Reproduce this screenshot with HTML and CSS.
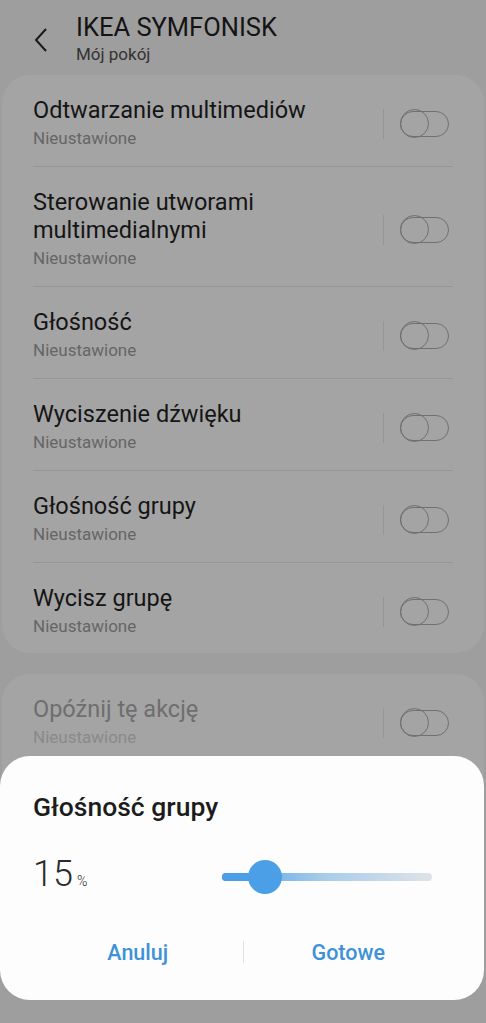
FILE: index.html
```html
<!DOCTYPE html>
<html lang="pl">
<head>
    <meta charset="UTF-8">
    <meta name="viewport" content="width=device-width, initial-scale=1.0">
    <title>IKEA SYMFONISK</title>
    <link rel="stylesheet" href="styles.css">
</head>
<body>
    <header class="topbar">
        <svg class="back" width="16" height="26" viewBox="0 0 16 26">
            <path d="M13 2 L3 13 L13 24" fill="none" stroke="#1a1a1a" stroke-width="2"/>
        </svg>
        <div class="heading">
            <div class="title">IKEA SYMFONISK</div>
            <div class="subtitle">Mój pokój</div>
        </div>
    </header>

    <section class="card">
        <div class="row">
            <div class="text"><div class="name">Odtwarzanie multimediów</div><div class="state">Nieustawione</div></div>
            <span class="sep"></span><span class="switch"></span>
        </div>
        <div class="row">
            <div class="text"><div class="name">Sterowanie utworami<br>multimedialnymi</div><div class="state">Nieustawione</div></div>
            <span class="sep"></span><span class="switch"></span>
        </div>
        <div class="row">
            <div class="text"><div class="name">Głośność</div><div class="state">Nieustawione</div></div>
            <span class="sep"></span><span class="switch"></span>
        </div>
        <div class="row">
            <div class="text"><div class="name">Wyciszenie dźwięku</div><div class="state">Nieustawione</div></div>
            <span class="sep"></span><span class="switch"></span>
        </div>
        <div class="row">
            <div class="text"><div class="name">Głośność grupy</div><div class="state">Nieustawione</div></div>
            <span class="sep"></span><span class="switch"></span>
        </div>
        <div class="row">
            <div class="text"><div class="name">Wycisz grupę</div><div class="state">Nieustawione</div></div>
            <span class="sep"></span><span class="switch"></span>
        </div>
    </section>

    <section class="card">
        <div class="row disabled">
            <div class="text"><div class="name">Opóźnij tę akcję</div><div class="state">Nieustawione</div></div>
            <span class="sep"></span><span class="switch"></span>
        </div>
        <div class="row disabled">
            <div class="text"><div class="name">&nbsp;</div><div class="state">&nbsp;</div></div>
        </div>
    </section>

    <div class="dialog">
        <h2 class="dialog-title">Głośność grupy</h2>
        <div class="volume">
            <div class="value">15<span class="pct">%</span></div>
            <div class="slider">
                <div class="fill"></div>
                <div class="thumb"></div>
            </div>
        </div>
        <div class="actions">
            <button class="btn">Anuluj</button>
            <span class="divider"></span>
            <button class="btn">Gotowe</button>
        </div>
    </div>
</body>
</html>
```

FILE: styles.css
```css
body{
    margin:0;
    background:#9e9e9e;
    font-family:Roboto, "Noto Sans", sans-serif;
    color:#141414;
    overflow:hidden;
    height:1023px;
}
.topbar{
    display:flex;
    align-items:flex-start;
    height:75px;
    box-sizing:border-box;
    padding:12px 0 0 33px;
}
.back{
    margin-top:15px;
    margin-right:27px;
}
.title{
    font-size:25.5px;
    line-height:30px;
    color:#141414;
}
.subtitle{
    font-size:17px;
    line-height:25px;
    color:#333;
}
.card{
    background:#a4a4a4;
    margin:0 2px 21px 2px;
    border-radius:28px;
    padding:0 31px 0 31px;
}
.row{
    display:flex;
    align-items:center;
    padding:21px 0 14px 0;
    border-bottom:1px solid #959595;
}
.row:last-child{
    border-bottom:none;
    padding-bottom:13px;
}
.text{
    flex:1;
}
.name{
    font-size:23.5px;
    line-height:28px;
    color:#151515;
}
.state{
    font-size:17px;
    line-height:28px;
    color:#666;
}
.disabled .name{
    color:#6e6e6e;
}
.disabled .state{
    color:#8a8a8a;
}
.sep{
    width:1px;
    height:30px;
    background:#969696;
    margin-right:16px;
}
.switch{
    position:relative;
    width:49px;
    height:26px;
    box-sizing:border-box;
    border:1.5px solid #707070;
    border-radius:13px;
    margin-right:4px;
}
.switch::before{
    content:"";
    position:absolute;
    left:-1.5px;
    top:-3.5px;
    width:29px;
    height:29px;
    box-sizing:border-box;
    border:1.5px solid #707070;
    border-radius:50%;
}
.dialog{
    position:fixed;
    left:0;
    right:2px;
    top:756px;
    height:244px;
    background:#fdfdfd;
    border-radius:30px;
    box-sizing:border-box;
    padding:36px 31px 0 33px;
}
.dialog-title{
    margin:0;
    font-size:26.5px;
    font-weight:500;
    line-height:30px;
    color:#1c1c1c;
}
.volume{
    display:flex;
    align-items:center;
    margin-top:38px;
    height:34px;
}
.value{
    width:189px;
    font-size:36px;
    font-weight:300;
    color:#2a2a2a;
    line-height:34px;
}
.pct{
    font-size:14px;
    margin-left:4px;
}
.slider{
    position:relative;
    width:210px;
    height:8px;
    border-radius:4px;
    background:linear-gradient(to right, #4a9fe6 0%, #a9cdea 50%, #dfe3e8 100%);
}
.fill{
    width:43px;
    height:8px;
    border-radius:4px;
    background:#4a9fe6;
}
.thumb{
    position:absolute;
    left:26px;
    top:-13px;
    width:34px;
    height:34px;
    border-radius:50%;
    background:#4a9fe6;
}
.actions{
    display:flex;
    align-items:center;
    margin-top:38px;
    height:40px;
}
.btn{
    flex:1;
    border:none;
    background:none;
    font-family:Roboto, "Noto Sans", sans-serif;
    font-size:21.5px;
    font-weight:500;
    color:#3e92d8;
    padding:0;
}
.divider{
    width:1px;
    height:22px;
    background:#e2e2e2;
}
```
